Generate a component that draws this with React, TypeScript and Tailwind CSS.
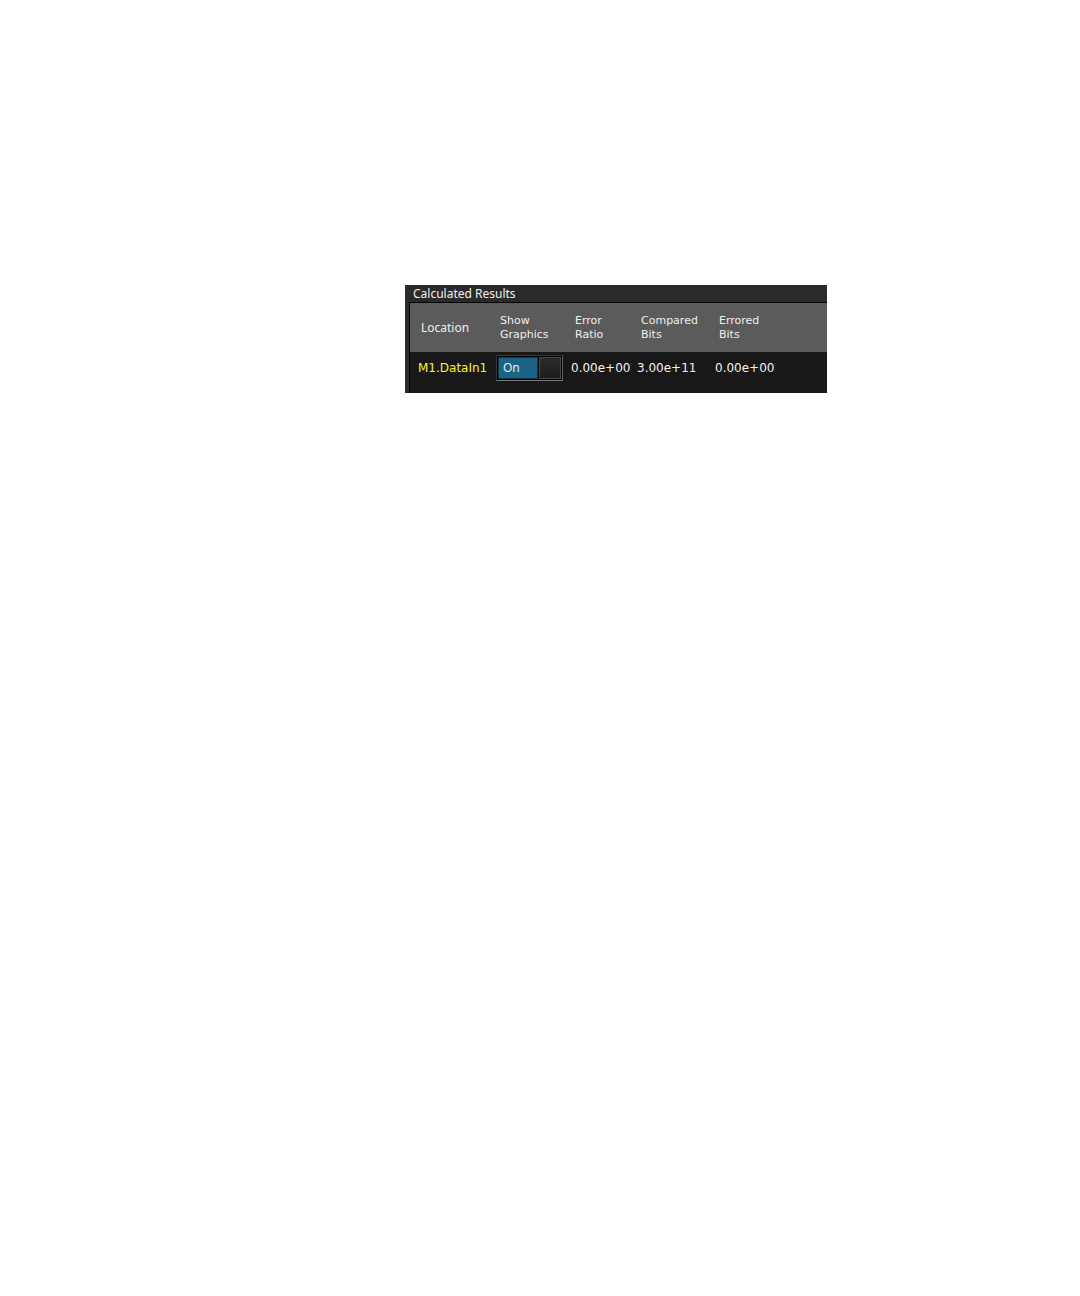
type Result = {
  location: string;
  ratio: string;
  compared: string;
  errored: string;
};

const results: Result[] = [
  { location: 'M1.DataIn1', ratio: '0.00e+00', compared: '3.00e+11', errored: '0.00e+00' },
];

function GraphicsSwitch({ label }: { label: string }) {
  return (
    <button
      type="button"
      role="switch"
      aria-checked="true"
      aria-label={label}
      className="flex h-[26px] w-[67px] gap-px border border-[#363636] border-b-[#777777] border-r-[#5a5a5a] bg-black p-px"
    >
      <span className="flex h-full w-10 items-center border border-[#0c3346] bg-[#1a6587] pl-1 font-['Noto_Sans',sans-serif] text-[12px] leading-4 text-[#e8f0f4]">
        On
      </span>
      <span className="h-full flex-1 border border-[#484848] bg-linear-to-b from-[#2b2b2b] to-[#1c1c1c]" />
    </button>
  );
}

export default function App() {
  return (
    <main className="min-h-screen bg-white pl-[37.5%] pt-[285px] font-['DejaVu_Sans',sans-serif]">
      <section className="w-full max-w-[422px] bg-[#2a2a2a] pl-1">
        <h1 className="h-[18px] border-b border-black pl-1 font-['Noto_Sans',sans-serif] text-[12px] leading-[17px] text-[#f0f0f0]">
          Calculated Results
        </h1>
        <div className="border-l border-black bg-[#181818] pb-[10px]">
          <table className="w-full table-fixed border-collapse text-left">
            <colgroup>
              <col className="w-[86px]" />
              <col className="w-[75px]" />
              <col className="w-[66px]" />
              <col className="w-[78px]" />
              <col />
            </colgroup>
            <thead className="bg-[#5b5b5b] text-[11px] leading-[14px] text-[#eeeeee]">
              <tr className="h-[49px]">
                <th className="pl-[11px] font-['Noto_Sans',sans-serif] text-[12px] font-normal">Location</th>
                <th className="pl-1 font-normal">Show<br />Graphics</th>
                <th className="pl-1 font-normal">Error<br />Ratio</th>
                <th className="pl-1 font-normal">Compared<br />Bits</th>
                <th className="pl-1 font-normal">Errored<br />Bits</th>
              </tr>
            </thead>
            <tbody className="text-[12px] leading-4 text-[#f2f2f2]">
              {results.map((r) => (
                <tr key={r.location} className="h-[31px]">
                  <td className="pl-2 text-[#fafa0a]">{r.location}</td>
                  <td>
                    <GraphicsSwitch label={`Show graphics for ${r.location}`} />
                  </td>
                  <td>{r.ratio}</td>
                  <td>{r.compared}</td>
                  <td>{r.errored}</td>
                </tr>
              ))}
            </tbody>
          </table>
        </div>
      </section>
    </main>
  );
}
